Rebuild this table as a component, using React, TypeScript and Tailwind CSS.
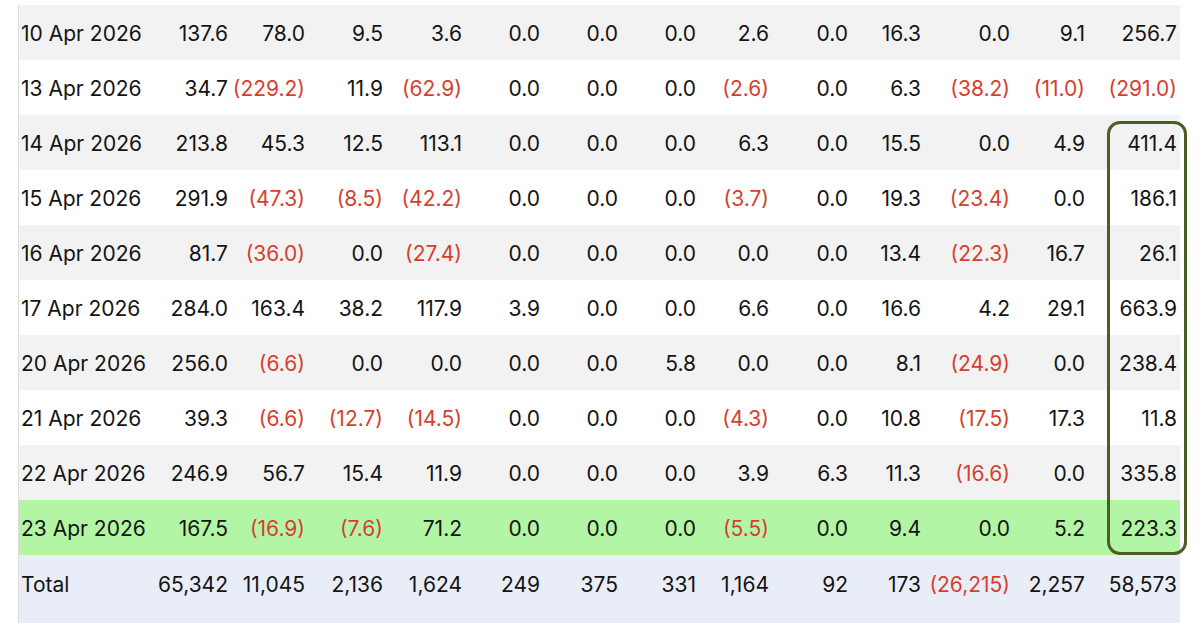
import React from "react";

type Row = { date: string; vals: string[]; tone?: "gray" | "white" | "green" };

const rows: Row[] = [
  { date: "10 Apr 2026", vals: ["137.6", "78.0", "9.5", "3.6", "0.0", "0.0", "0.0", "2.6", "0.0", "16.3", "0.0", "9.1", "256.7"] },
  { date: "13 Apr 2026", vals: ["34.7", "(229.2)", "11.9", "(62.9)", "0.0", "0.0", "0.0", "(2.6)", "0.0", "6.3", "(38.2)", "(11.0)", "(291.0)"] },
  { date: "14 Apr 2026", vals: ["213.8", "45.3", "12.5", "113.1", "0.0", "0.0", "0.0", "6.3", "0.0", "15.5", "0.0", "4.9", "411.4"] },
  { date: "15 Apr 2026", vals: ["291.9", "(47.3)", "(8.5)", "(42.2)", "0.0", "0.0", "0.0", "(3.7)", "0.0", "19.3", "(23.4)", "0.0", "186.1"] },
  { date: "16 Apr 2026", vals: ["81.7", "(36.0)", "0.0", "(27.4)", "0.0", "0.0", "0.0", "0.0", "0.0", "13.4", "(22.3)", "16.7", "26.1"] },
  { date: "17 Apr 2026", vals: ["284.0", "163.4", "38.2", "117.9", "3.9", "0.0", "0.0", "6.6", "0.0", "16.6", "4.2", "29.1", "663.9"] },
  { date: "20 Apr 2026", vals: ["256.0", "(6.6)", "0.0", "0.0", "0.0", "0.0", "5.8", "0.0", "0.0", "8.1", "(24.9)", "0.0", "238.4"] },
  { date: "21 Apr 2026", vals: ["39.3", "(6.6)", "(12.7)", "(14.5)", "0.0", "0.0", "0.0", "(4.3)", "0.0", "10.8", "(17.5)", "17.3", "11.8"] },
  { date: "22 Apr 2026", vals: ["246.9", "56.7", "15.4", "11.9", "0.0", "0.0", "0.0", "3.9", "6.3", "11.3", "(16.6)", "0.0", "335.8"] },
  { date: "23 Apr 2026", vals: ["167.5", "(16.9)", "(7.6)", "71.2", "0.0", "0.0", "0.0", "(5.5)", "0.0", "9.4", "0.0", "5.2", "223.3"], tone: "green" },
];

const total = ["65,342", "11,045", "2,136", "1,624", "249", "375", "331", "1,164", "92", "173", "(26,215)", "2,257", "58,573"];

const widths = ["w-[132px]", "w-[80px]", "w-[77px]", "w-[78px]", "w-[79px]", "w-[78px]", "w-[78px]", "w-[78px]", "w-[73px]", "w-[79px]", "w-[73px]", "w-[89px]", "w-[75px]", "w-[92px]"];

function Num({ v }: { v: string }) {
  return <span className={v.startsWith("(") ? "text-[#d63f2e]" : ""}>{v}</span>;
}

export default function App() {
  return (
    <div className="w-[1200px] h-[623px] overflow-hidden bg-white font-['Inter','Noto_Sans',sans-serif] text-[21px] text-[#141414]">
      <div className="relative ml-[18px] mt-[5px] w-[1162px] border-x border-[#dcdcdc]">
        <table className="table-fixed border-collapse w-full">
          <colgroup>
            {widths.map((w, i) => (
              <col key={i} className={w} />
            ))}
          </colgroup>
          <tbody>
            {rows.map((r, i) => (
              <tr
                key={r.date}
                className={
                  r.tone === "green" ? "h-[55px] bg-[#b2f6a5]" : i % 2 === 0 ? "h-[55px] bg-[#f2f2f2]" : "h-[55px] bg-white"
                }
              >
                <td className="pl-[2px] pt-[3px] text-left whitespace-nowrap">{r.date}</td>
                {r.vals.map((v, j) => (
                  <td key={j} className="pr-[3px] pt-[3px] text-right whitespace-nowrap">
                    <Num v={v} />
                  </td>
                ))}
              </tr>
            ))}
            <tr className="h-[70px] bg-[#e9edf7] align-top">
              <td className="pl-[2px] pt-[14px] text-left">Total</td>
              {total.map((v, j) => (
                <td key={j} className="pr-[3px] pt-[14px] text-right whitespace-nowrap">
                  <Num v={v} />
                </td>
              ))}
            </tr>
          </tbody>
        </table>
        {/* highlight around the last column */}
        <div className="absolute left-[1088px] top-[116px] w-[80px] h-[434px] rounded-[13px] border-[3px] border-[#4a5e26] pointer-events-none" />
      </div>
    </div>
  );
}
